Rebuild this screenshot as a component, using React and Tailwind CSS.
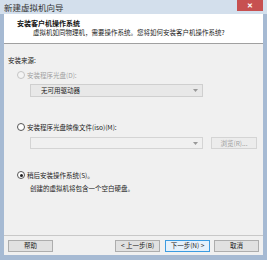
import React from "react";

const font = { fontFamily: '"Noto Sans CJK SC", "Noto Sans", sans-serif' };

function Radio({ checked, disabled }) {
  return (
    <span
      className={`relative inline-block shrink-0 w-[8px] h-[8px] rounded-full border ${disabled ? "border-[#c4c4c4] bg-[#f4f4f4]" : "border-[#555] bg-white"}`}
    >
      {checked && <span className="absolute left-[1.5px] top-[1.5px] w-[3px] h-[3px] rounded-full bg-[#222]" />}
    </span>
  );
}

function Arrow() {
  return (
    <svg width="5" height="3" viewBox="0 0 5 3"><path d="M0 0h5L2.5 3z" fill="#999" /></svg>
  );
}

function Btn({ children, focused, disabled, className = "" }) {
  return (
    <div
      className={`h-[12px] flex items-center justify-center border ${focused ? "border-[#3c9be0] bg-[#e5f1fb]" : disabled ? "border-[#d4d4d4] bg-[#ececec]" : "border-[#adadad] bg-[#e1e1e1]"} ${disabled ? "text-[#a0a0a0]" : "text-[#222]"} text-[6.5px] leading-none ${className}`}
    >
      {children}
    </div>
  );
}

export default function App() {
  return (
    <div className="w-[267px] h-[260px] bg-[#a6bad3] flex flex-col" style={font}>
      {/* title bar */}
      <div className="h-[14px] flex items-start bg-[#d3dfec] px-[4px]">
        <div className="flex-1 text-[8.5px] leading-[14px] text-[#333]">新建虚拟机向导</div>
        <div className="w-[26px] h-[11px] bg-[#c75050] flex items-center justify-center text-white text-[7px] font-bold leading-none">✕</div>
      </div>
      <div className="flex-1 mx-[4px] mb-[5px] flex flex-col bg-[#f0f0f0]">
        {/* header */}
        <div className="h-[30px] bg-white border-b border-[#a0a0a0] pl-[13px] pt-[5px]">
          <div className="text-[7px] font-bold leading-[9px] text-[#111]">安装客户机操作系统</div>
          <div className="pl-[16px] text-[6.5px] leading-[9px] text-[#222]">虚拟机如同物理机，需要操作系统。您将如何安装客户机操作系统?</div>
        </div>
        <div className="flex-1 flex flex-col pl-[4px] pr-[4px] text-[6.5px]">
          <div className="h-[10px] flex items-center leading-none text-[#222] mt-[11px]">安装来源:</div>
          <div className="h-[10px] flex items-center gap-[2px] mt-[5px] ml-[9px] leading-none text-[#a0a0a0]">
            <Radio disabled /> <span>安装程序光盘(D):</span>
          </div>
          <div className="mt-[4px] ml-[22px] w-[173px] h-[13px] bg-[#e8e8e8] border border-[#cfcfcf] flex items-center pl-[10px] pr-[4px] leading-none text-[#222]">
            <span className="flex-1">无可用驱动器</span>
            <Arrow />
          </div>
          <div className="h-[10px] flex items-center gap-[2px] mt-[25px] ml-[9px] leading-none text-[#222]">
            <Radio /> <span>安装程序光盘映像文件(iso)(M):</span>
          </div>
          <div className="mt-[5px] ml-[22px] flex items-center gap-[8px]">
            <div className="w-[173px] h-[12px] bg-[#f0f0f0] border border-[#d4d4d4] flex items-center justify-end pr-[4px]">
              <Arrow />
            </div>
            <Btn disabled className="w-[46px] !h-[12px]">浏览(R)...</Btn>
          </div>
          <div className="h-[10px] flex items-center gap-[2px] mt-[21px] ml-[9px] leading-none text-[#222]">
            <Radio checked /> <span>稍后安装操作系统(S)。</span>
          </div>
          <div className="h-[10px] flex items-center mt-[3px] ml-[22px] leading-none text-[#222]">创建的虚拟机将包含一个空白硬盘。</div>
        </div>
        <div className="border-t border-[#c8c8c8] h-[20px] flex items-center px-[4px]">
          <Btn className="w-[45px]">帮助</Btn>
          <div className="flex-1" />
          <Btn className="w-[45px]">&lt; 上一步(B)</Btn>
          <Btn focused className="w-[45px] ml-[5px]">下一步(N) &gt;</Btn>
          <Btn className="w-[45px] ml-[4px]">取消</Btn>
        </div>
      </div>
    </div>
  );
}
